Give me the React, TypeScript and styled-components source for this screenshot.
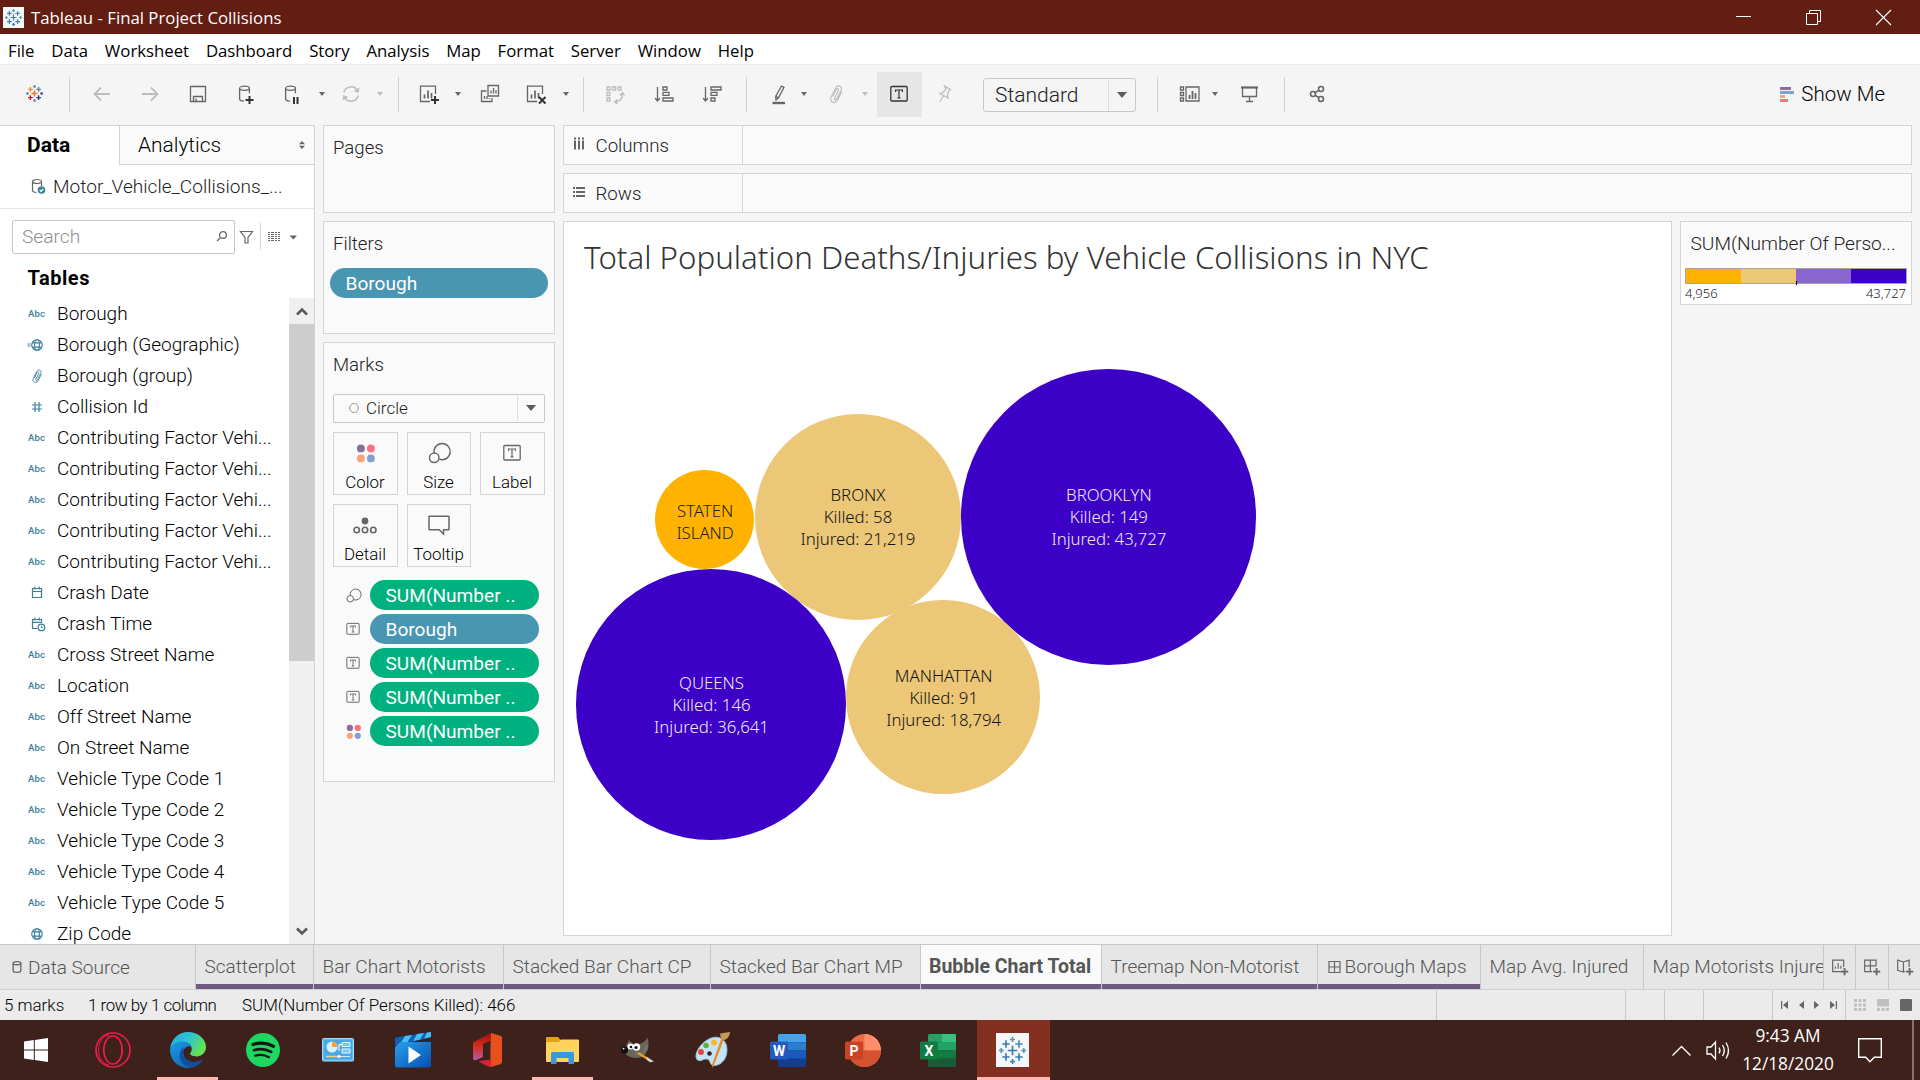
import React from "react";
import styled, { createGlobalStyle, css } from "styled-components";

const UI = `Roboto, "Liberation Sans", sans-serif`;
const SYS = `"Open Sans", "Liberation Sans", sans-serif`;
const VIZ = `"Noto Sans", "Liberation Sans", sans-serif`;
const LINE = "#d4d4d4";
const GREY = "#666666";
const LIGHT = "#bdbdbd";
const TEAL = "#3d7f9b";

const Global = createGlobalStyle`
  * { box-sizing: border-box; }
  body { margin: 0; background: #f5f5f5; overflow: hidden; }
  svg { display: block; flex: none; overflow: visible; }
`;

const Screen = styled.div`
  width: 1920px;
  height: 1080px;
  display: flex;
  flex-direction: column;
  background: #f5f5f5;
  font-family: ${UI};
  font-weight: 300;
  color: #000;
  white-space: nowrap;
  overflow: hidden;
`;

/* ---------- window chrome ---------- */

const TitleBar = styled.header`
  height: 34px;
  flex: none;
  display: flex;
  align-items: center;
  padding: 0 29px 0 3px;
  background: #621e12;
  color: #fff;
  font: 400 16.8px ${SYS};
`;
const TitleText = styled.span`
  flex: 1;
  padding-left: 7px;
`;
const WindowButtons = styled.div`
  display: flex;
  gap: 55px;
`;

const MenuBar = styled.nav`
  height: 31px;
  flex: none;
  display: flex;
  gap: 16.8px;
  padding-left: 8px;
  background: #fff;
  border-bottom: 1px solid #ececec;
  font: 400 16.75px/34px ${SYS};
`;

/* ---------- toolbar ---------- */

const ToolBarRow = styled.div`
  height: 59px;
  flex: none;
  display: flex;
  align-items: center;
  padding: 0 35px 1px 0;
`;
const Tool = styled.span<{ $gap: number }>`
  width: 24px;
  height: 24px;
  flex: none;
  margin-left: ${(p) => p.$gap}px;
`;
const Caret = styled.span<{ $gap: number; $dim?: boolean }>`
  width: 8px;
  flex: none;
  margin-left: ${(p) => p.$gap}px;
  display: flex;
  justify-content: center;
  &::after {
    content: "";
    border: 3px solid transparent;
    border-top: 4px solid ${(p) => (p.$dim ? LIGHT : GREY)};
    border-bottom: 0;
  }
`;
const Separator = styled.span<{ $gap: number }>`
  width: 1px;
  height: 35px;
  flex: none;
  margin-left: ${(p) => p.$gap}px;
  background: #d0d0d0;
`;
const ActiveTool = styled.span`
  width: 45px;
  height: 45px;
  flex: none;
  margin-left: 8px;
  padding-right: 2px;
  display: flex;
  align-items: center;
  justify-content: center;
  background: #e6e6e6;
`;
const FitSelect = styled.div`
  width: 153px;
  height: 34px;
  flex: none;
  margin: 1px 0 0 27px;
  display: flex;
  align-items: center;
  border: 1px solid #c8c8c8;
  border-radius: 3px;
  font-size: 21px;
  color: #222;
`;
const SelectValue = styled.span`
  flex: 1;
  padding-left: 11px;
`;
const SelectArrow = styled.span<{ $w: number }>`
  width: ${(p) => p.$w}px;
  align-self: stretch;
  display: flex;
  align-items: center;
  justify-content: center;
  border-left: 1px solid #dedede;
  &::after {
    content: "";
    border: 5px solid transparent;
    border-top: 6px solid #5c5c5c;
    border-bottom: 0;
  }
`;
const ShowMe = styled.div`
  margin-left: auto;
  display: flex;
  align-items: center;
  gap: 7.5px;
  font-size: 20.5px;
`;

/* ---------- workspace ---------- */

const Body = styled.main`
  height: 820px;
  flex: none;
  display: flex;
  padding-top: 1px;
`;

const DataPane = styled.aside`
  width: 315px;
  flex: none;
  display: flex;
  flex-direction: column;
  background: #fff;
  border-top: 1px solid ${LINE};
  border-right: 1px solid ${LINE};
`;
const PaneTabs = styled.div`
  height: 39px;
  flex: none;
  display: flex;
  line-height: 38px;
`;
const DataTab = styled.div`
  width: 119px;
  padding-left: 27px;
  font-size: 21px;
  font-weight: 700;
`;
const AnalyticsTab = styled.div`
  flex: 1;
  display: flex;
  align-items: center;
  justify-content: space-between;
  padding: 0 9px 0 18px;
  background: #fafafa;
  border-left: 1px solid ${LINE};
  border-bottom: 1px solid ${LINE};
  font-size: 20.9px;
`;
const SourceRow = styled.div`
  height: 44px;
  flex: none;
  display: flex;
  align-items: center;
  gap: 7px;
  padding-left: 31px;
  border-bottom: 1px solid #e4e4e4;
  font-size: 19.1px;
  color: #222;
`;
const SearchRow = styled.div`
  flex: none;
  display: flex;
  align-items: center;
  padding: 11px 0 0 12px;
`;
const SearchBox = styled.div`
  width: 223px;
  height: 34px;
  display: flex;
  align-items: center;
  justify-content: space-between;
  padding: 0 7px 2px 9px;
  border: 1px solid #c8c8c8;
  border-radius: 2px;
  color: #8e8e8e;
  font-size: 19.2px;
`;
const SearchTools = styled.div`
  display: flex;
  align-items: center;
  padding-left: 5px;
  padding-bottom: 1px;
`;
const ThinRule = styled.span`
  width: 1px;
  height: 27px;
  margin: 0 7px 0 6px;
  background: ${LINE};
`;
const TablesHeading = styled.h2`
  margin: 0;
  height: 43px;
  flex: none;
  padding-left: 27.5px;
  font: 700 20px/48px ${UI};
  letter-spacing: 0.55px;
`;
const FieldArea = styled.div`
  flex: 1;
  min-height: 0;
  display: flex;
  overflow: hidden;
`;
const FieldList = styled.ul`
  flex: 1;
  margin: 0;
  padding: 1px 0 0;
  list-style: none;
`;
const Field = styled.li`
  height: 31px;
  display: flex;
  align-items: center;
  padding-left: 24.5px;
  gap: 8.5px;
  font-size: 19px;
`;
const FieldIcon = styled.span`
  width: 24px;
  height: 24px;
  flex: none;
  display: flex;
  align-items: center;
  justify-content: center;
  font: 500 9.6px ${UI};
  letter-spacing: 0.1px;
  color: ${TEAL};
`;
const ScrollBar = styled.div`
  width: 25px;
  margin-top: 1px;
  display: flex;
  flex-direction: column;
  background: #f0f0f0;
`;
const ScrollButton = styled.span`
  height: 26px;
  flex: none;
  display: flex;
  align-items: center;
  justify-content: center;
`;
const ScrollThumb = styled.span`
  height: 337px;
  background: #cdcdcd;
`;
const ScrollTrack = styled.span`
  flex: 1;
`;

const Shelves = styled.section`
  width: 232px;
  flex: none;
  margin-left: 8px;
  display: flex;
  flex-direction: column;
  gap: 8px;
`;
const Card = styled.div<{ $h: number }>`
  height: ${(p) => p.$h}px;
  flex: none;
  background: #fafafa;
  border: 1px solid ${LINE};
`;
const CardTitle = styled.div`
  height: 46px;
  padding-left: 9px;
  font-size: 18.6px;
  line-height: 44.5px;
  color: #222;
`;
const pillTone = { blue: "#4996b2", green: "#00b180" };
const Pill = styled.div<{ $tone: keyof typeof pillTone; $w: number }>`
  width: ${(p) => p.$w}px;
  height: 30px;
  flex: none;
  padding-left: 15.5px;
  border-radius: 15px;
  background: ${(p) => pillTone[p.$tone]};
  color: #fff;
  font-size: 19.1px;
  font-weight: 400;
  line-height: 31px;
`;
const FilterPills = styled.div`
  padding-left: 6px;
`;
const MarkSelect = styled.div`
  width: 212px;
  height: 29px;
  margin: 5px 0 0 9px;
  display: flex;
  align-items: center;
  border: 1px solid #c8c8c8;
  border-radius: 2px;
  font-size: 17px;
  line-height: 25px;
  padding-bottom: 1px;
  color: #222;
`;
const MarkShape = styled.span`
  width: 10px;
  height: 10px;
  margin-left: 15px;
  border: 1.5px solid #999;
  border-radius: 50%;
`;
const MarkName = styled.span`
  flex: 1;
  padding-left: 7px;
`;
const MarkGrid = styled.div`
  display: grid;
  grid-template-columns: 65px 64px 65px;
  grid-auto-rows: 63px;
  gap: 9px;
  padding: 9px 0 0 9px;
`;
const MarkButton = styled.div`
  display: flex;
  flex-direction: column;
  align-items: center;
  border: 1px solid ${LINE};
  padding: 8px 1px 0 0;
  font-size: 16.9px;
  line-height: 34px;
  svg { height: 24px; }
`;
const Encodings = styled.div`
  display: flex;
  flex-direction: column;
  gap: 4px;
  padding: 13px 0 0 17px;
`;
const Encoding = styled.div`
  display: flex;
  align-items: center;
  gap: 5px;
`;

const Canvas = styled.section`
  width: 1349px;
  flex: none;
  margin-left: 8px;
  display: flex;
  flex-direction: column;
  gap: 8px;
`;
const Shelf = styled.div`
  height: 40px;
  flex: none;
  display: flex;
  background: #fafafa;
  border: 1px solid ${LINE};
`;
const ShelfLabel = styled.div`
  width: 179px;
  display: flex;
  align-items: center;
  gap: 4.5px;
  padding-left: 3px;
  border-right: 1px solid ${LINE};
  font-size: 18.7px;
  line-height: 38px;
  color: #222;
  span { padding-top: 1px; }
`;
const ViewRow = styled.div`
  display: flex;
  gap: 8px;
  align-items: flex-start;
`;
const View = styled.div`
  width: 1109px;
  height: 715px;
  position: relative;
  background: #fff;
  border: 1px solid ${LINE};
`;
const ViewTitle = styled.h1`
  margin: 0;
  padding-left: 20px;
  font: 300 31.26px/70px ${VIZ};
  color: #333;
`;
const Bubble = styled.div<{ $cx: number; $cy: number; $r: number; $fill: string; $ink: string; $drop?: number }>`
  position: absolute;
  left: ${(p) => p.$cx - p.$r}px;
  top: ${(p) => p.$cy - p.$r}px;
  width: ${(p) => p.$r * 2}px;
  height: ${(p) => p.$r * 2}px;
  padding: ${(p) => p.$drop ?? 1}px 0 0 1px;
  display: flex;
  flex-direction: column;
  align-items: center;
  justify-content: center;
  border-radius: 50%;
  background: ${(p) => p.$fill};
  color: ${(p) => p.$ink};
  font: 300 16.8px/22px ${VIZ};
`;

const Legend = styled.div`
  width: 232px;
  height: 84px;
  display: flex;
  flex-direction: column;
  background: #fff;
  border: 1px solid ${LINE};
`;
const LegendTitle = styled.div`
  height: 42px;
  padding-left: 9.5px;
  background: #fafafa;
  font-size: 19.1px;
  line-height: 44px;
  color: #222;
`;
const Ramp = styled.div`
  height: 16px;
  margin: 4px 4px 0;
  display: grid;
  grid-template-columns: repeat(4, 1fr);
  border: 1px solid #a9a59a;
  position: relative;
  &::after {
    content: "";
    position: absolute;
    left: 110px;
    top: 12px;
    width: 1px;
    height: 4px;
    background: #000;
  }
`;
const Swatch = styled.span<{ $c: string }>`
  background: ${(p) => p.$c};
`;
const LegendRange = styled.div`
  display: flex;
  justify-content: space-between;
  padding: 0 5px 0 4px;
  font: 300 13px/19px ${VIZ};
  color: #222;
`;

/* ---------- sheet tabs and status ---------- */

const SheetTabs = styled.div`
  height: 46px;
  flex: none;
  display: flex;
  background: #e6e6e6;
  border-top: 1px solid #c8c8c8;
  border-bottom: 1px solid #d0d0d0;
`;
const Sheet = styled.div<{ $w: number; $story?: boolean; $active?: boolean }>`
  width: ${(p) => p.$w}px;
  flex: none;
  padding-left: 8.5px;
  border-left: 1px solid #c8c8c8;
  overflow: hidden;
  font-size: 19px;
  line-height: 44px;
  color: #555;
  display: flex;
  align-items: center;
  ${(p) => p.$story && css`box-shadow: inset 0 -5px 0 #6f5b82;`}
  ${(p) => p.$active && css`
    background: #fafafa;
    font-weight: 700;
    font-size: 19.5px;
    line-height: 42px;
    padding-bottom: 1px;
    padding-left: 8px;
  `}
`;
const SheetIcon = styled.span`
  margin: 0 3px 0 -1px;
`;
const SourceTab = styled.div`
  width: 195px;
  flex: none;
  display: flex;
  align-items: center;
  padding-left: 5px;
  font-size: 19px;
  line-height: 45px;
  color: #555;
`;
const NewSheet = styled.div<{ $w: number }>`
  width: ${(p) => p.$w}px;
  flex: none;
  display: flex;
  align-items: center;
  justify-content: center;
  border-left: 1px solid #c8c8c8;
`;

const StatusBar = styled.footer`
  height: 30px;
  flex: none;
  display: flex;
  background: #ebebeb;
  padding-left: 4px;
  font-size: 16.95px;
  line-height: 30px;
`;
const StatusText = styled.span<{ $w: number; $tight?: boolean }>`
  width: ${(p) => p.$w}px;
  letter-spacing: ${(p) => (p.$tight ? "-0.45px" : "0")};
`;
const StatusCell = styled.span<{ $w: number; $gap?: number }>`
  width: ${(p) => p.$w}px;
  display: flex;
  align-items: center;
  justify-content: center;
  gap: ${(p) => p.$gap ?? 0}px;
  border-left: 1px solid #c8c8c8;
`;

/* ---------- taskbar ---------- */

const TaskBar = styled.div`
  height: 60px;
  flex: none;
  display: flex;
  background: #3d211a;
  color: #fff;
`;
const Task = styled.div<{ $open?: boolean; $active?: boolean; $first?: boolean }>`
  width: 75px;
  flex: none;
  display: flex;
  align-items: center;
  justify-content: center;
  padding-right: ${(p) => (p.$first ? 3 : 0)}px;
  background: ${(p) =>
    p.$active
      ? "linear-gradient(#ffb9b0, #ffb9b0) right bottom / 73px 3px no-repeat, linear-gradient(#832f22, #832f22) right center / 73px 100% no-repeat"
      : p.$open
      ? "linear-gradient(#ffb9b0, #ffb9b0) center bottom / 61px 3px no-repeat"
      : "none"};
`;
const Tray = styled.div`
  flex: 1;
  display: flex;
  align-items: center;
  justify-content: flex-end;
`;
const Clock = styled.div`
  width: 112px;
  margin-right: 14px;
  text-align: center;
  font: 400 17.3px/28px ${SYS};
  padding-bottom: 1px;
`;
const TrayIcon = styled.span<{ $gap: number }>`
  margin-right: ${(p) => p.$gap}px;
`;
const DesktopPeek = styled.span`
  width: 8px;
  align-self: stretch;
  border-left: 2px solid #8b716b;
`;

/* ---------- drawings ---------- */

type IcoProps = { size?: number; box?: number; color?: string; width?: number; children: React.ReactNode };
const Ico = ({ size = 24, box = 24, color = GREY, width = 1.3, children }: IcoProps) => (
  <svg width={size} height={size} viewBox={`0 0 ${box} ${box}`} fill="none" stroke={color} strokeWidth={width}>
    {children}
  </svg>
);

const plus = (x: number, y: number, r: number) => `M${x - r} ${y}h${2 * r}M${x} ${y - r}v${2 * r}`;

const TableauMark = ({ size, colors, width = 1.4 }: { size: number; colors: string[]; width?: number }) => (
  <Ico size={size} width={width}>
    <path stroke={colors[0]} d={plus(12, 12, 4.2)} />
    <path stroke={colors[1]} d={plus(6.2, 6.2, 3.3)} />
    <path stroke={colors[2]} d={plus(17.8, 6.2, 3.3)} />
    <path stroke={colors[3]} d={plus(6.2, 17.8, 3.3)} />
    <path stroke={colors[4]} d={plus(17.8, 17.8, 3.3)} />
    <path stroke={colors[5]} d={plus(12, 2.2, 2.2)} />
    <path stroke={colors[6]} d={plus(12, 21.8, 2.2)} />
    <path stroke={colors[7]} d={plus(2, 12, 2.2)} />
    <path stroke={colors[8]} d={plus(22, 12, 2.2)} />
  </Ico>
);
const blues = ["#3b7fae", "#3b7fae", "#4b8db5", "#3b7fae", "#3b7fae", "#5a9ac0", "#3f85b2", "#5a9ac0", "#5a9ac0"];
const brand = ["#e8762d", "#eb912c", "#59879b", "#c72035", "#1f457e", "#7199a6", "#7199a6", "#7099a5", "#5c6692"];

const Cylinder = () => (
  <>
    <ellipse cx="10.5" cy="6.3" rx="4.9" ry="2.1" />
    <path d="M5.6 6.3V17c0 1.1 1.8 2 4.4 2.1M15.4 6.3v5" />
  </>
);
const ChartBox = () => (
  <>
    <path d="M18.5 12V4.2h-15v15.3H13" />
    <path d="M7.5 16.5v-4M11 16.5v-8M14.5 16.5v-5.5" strokeWidth="1.7" />
  </>
);
const TBox = ({ size = 24, color = GREY }: { size?: number; color?: string }) => (
  <Ico size={size} color={color}>
    <rect x="3.8" y="4.5" width="16.4" height="14.5" rx="1" />
    <path d="M8.6 10V8h6.8v2M12 8v8M10.3 16h3.4" strokeWidth="1.2" />
  </Ico>
);
const Dots = ({ size = 24 }: { size?: number }) => (
  <svg width={size} height={size} viewBox="0 0 24 24">
    <circle cx="6.2" cy="6.2" r="5" fill="#8a6f98" />
    <circle cx="18.8" cy="6.2" r="5" fill="#fb7180" />
    <circle cx="6.2" cy="18.8" r="5" fill="#f4a57d" />
    <circle cx="18.8" cy="18.8" r="5" fill="#7fa3cc" />
  </svg>
);
const SizeIcon = ({ size = 24 }: { size?: number }) => (
  <Ico size={size} width={1.6}>
    <path d="M6.700 11.800a8.800 8.800 0 1 1 5.900 7" />
    <circle cx="6.800" cy="17.200" r="5.200" />
  </Ico>
);
const Clip = ({ size = 24, color = LIGHT }: { size?: number; color?: string }) => (
  <Ico size={size} color={color} width={1.2}>
    <path d="M14.300 8.600l-3.700 7.600c-.9 2 1.200 2.800 2.100.9l4.500-8.900c1.700-3.700-3.600-6-5.500-2.300L7 15.300c-2.200 4.600 4.200 7.300 6.400 3.200l4.400-8.900" />
    <path d="M14.300 8.600c.9-1.900-1.300-2.700-2.200-.9L8.600 14.500" />
  </Ico>
);
const Globe = ({ eq }: { eq?: boolean }) => (
  <Ico size={24} color={TEAL} width={1.1}>
    <circle cx="12" cy="12" r="5.300" />
    <ellipse cx="12" cy="12" rx="2.400" ry="5.300" />
    <path d="M7.300 9.900h9.400M7.300 14.100h9.400" />
    {eq && <path d="M2.500 11h3M2.500 13h3" />}
  </Ico>
);
const Calendar = ({ clock }: { clock?: boolean }) => (
  <Ico size={24} color={TEAL} width={1.2}>
    {clock ? <path d="M12.500 16.500H7.500v-9h9v3M7.500 10.300h9M9.800 5.500v3M14.200 5.500v3" /> : <path d="M7.500 7.500h9v9h-9zM7.500 10.500h9M9.800 5.500v3M14.200 5.500v3" />}
    {clock && (
      <>
        <circle cx="16.400" cy="15.400" r="3.300" />
        <path d="M16.400 13.700v2h1.500" strokeWidth="1" />
      </>
    )}
  </Ico>
);
const Hash = () => (
  <Ico size={24} color={TEAL} width={1.2}>
    <path d="M10 7v10M14 7v10M7 10h10M7 14h10" />
  </Ico>
);
const ColumnsIcon = () => (
  <svg width="24" height="24" viewBox="0 0 24 24" fill={GREY}>
    {[7, 11, 15].map((x) => (
      <path key={x} d={`M${x} 4.500h2v2h-2zM${x} 7.500h2v9h-2z`} />
    ))}
  </svg>
);
const RowsIcon = () => (
  <svg width="24" height="24" viewBox="0 0 24 24" fill={GREY}>
    {[6, 10, 14].map((y) => (
      <path key={y} d={`M6 ${y}h2v2h-2zM9 ${y}h9v2h-9z`} />
    ))}
  </svg>
);
const MiniGrid = ({ hero }: { hero?: boolean }) => (
  <svg width="12" height="12" viewBox="0 0 12 12" fill="#c0c0c0">
    {hero ? <path d="M0 0h12v7.500H0z" /> : <path d="M0 0h3v3H0zM4.500 0h3v3h-3zM9 0h3v3H9zM0 4.500h3v3H0zM4.500 4.500h3v3h-3zM9 4.500h3v3H9z" />}
    <path d="M0 9h3v3H0zM4.500 9h3v3h-3zM9 9h3v3H9z" />
  </svg>
);

/* ---------- taskbar logos ---------- */

const WindowsLogo = () => (
  <svg width="24" height="24" viewBox="0 0 24 24" fill="#fff">
    <path d="M0 3.400l9.800-1.400v9.400H0zM10.800 1.900L24 0v11.400H10.800zM0 12.500h9.800v9.400L0 20.600zM10.800 12.500H24V24l-13.200-1.900z" />
  </svg>
);
const OperaLogo = () => (
  <Ico size={36} box={36} color="#ee1c4b" width={1.700}>
    <circle cx="18" cy="18" r="17" />
    <ellipse cx="18" cy="18" rx="9.300" ry="14" />
    <path d="M21 5.500c8 2.500 8 22.500 0 25" strokeWidth="1.300" />
    <path d="M14 3c-14 3-14 27 0 30" strokeWidth="1" />
  </Ico>
);
const EdgeLogo = () => (
  <svg width="36" height="36" viewBox="0 0 36 36">
    <defs>
      <linearGradient id="edgeTop" x1="0" x2="1" y1="0" y2=".5">
        <stop offset="0" stopColor="#2aa7e6" />
        <stop offset=".5" stopColor="#2bc3d2" />
        <stop offset="1" stopColor="#62e34f" />
      </linearGradient>
      <linearGradient id="edgeLow" x1="0" x2="1" y1="0" y2="1">
        <stop offset="0" stopColor="#1a9be6" />
        <stop offset="1" stopColor="#0c59a4" />
      </linearGradient>
    </defs>
    <path fill="url(#edgeTop)" d="M0 17C1 7 8.500 0 18 0c10 0 18 6.800 18 15 0 5.500-4.500 9.500-9.500 9.500-4 0-6.500-1.600-6.500-2.900 0-1 1.800-1.600 1.800-4.600 0-3.500-3.600-6.500-9-6.500C6.500 10.500 1.500 13.500 0 17z" />
    <path fill="url(#edgeLow)" d="M0 18C.5 13.500 5.500 9.500 12.500 9.500c4.500 0 8 1.800 9 5-6-1.500-10 3.500-7.500 9.500 2.800 6.500 12 8 19 3.600C30 32.600 24.500 36 18 36 8 36 0 28 0 18z" />
    <path fill="#0f4fa0" d="M14.500 14.800c-7.500 4.500-6.500 18.200 6.500 20.900 5-.9 9.300-4 12-8.100-8 4.400-15.500 2.400-18.600-2.600-2-3.600-1.800-7.600.1-10.200z" />
  </svg>
);
const SpotifyLogo = () => (
  <Ico size={34} box={34} color="#191414" width={3}>
    <circle cx="17" cy="17" r="17" fill="#1ed760" stroke="none" />
    <path strokeLinecap="round" d="M7 11.500c7-2.200 14.500-1.500 20.500 1.800" strokeWidth="3.200" />
    <path strokeLinecap="round" d="M8 17.200c6-1.800 12-1.200 17.200 1.700" strokeWidth="2.700" />
    <path strokeLinecap="round" d="M9 22.700c5-1.500 9.800-1 14 1.500" strokeWidth="2.200" />
  </Ico>
);
const PanelLogo = () => (
  <svg width="32" height="24" viewBox="0 0 32 24">
    <rect x=".5" y=".5" width="31" height="22.500" rx="1" fill="#5cbcf0" stroke="#9fdcf8" />
    <rect x="2" y="2" width="28" height="19.500" fill="#4aa9e4" />
    <circle cx="10" cy="9" r="5.500" fill="#d8f1fd" />
    <path d="M10 9V3.500A5.500 5.500 0 0 1 15.500 9z" fill="#f9a03f" />
    <path d="M20 4.500h8v4h-8zM20 11h8v4h-8z" fill="#7cc7ee" stroke="#dff4fd" />
    <path d="M17 13V6.500h3" stroke="#fff" fill="none" />
    <path d="M4 18.500h14" stroke="#f8cf72" strokeWidth="1.500" />
    <path d="M18 18.500h10" stroke="#cfeefc" />
    <circle cx="17" cy="18.500" r="1.500" fill="#fff" />
  </svg>
);
const MoviesLogo = () => (
  <svg width="36" height="36" viewBox="0 0 36 36">
    <defs>
      <linearGradient id="mv" x1="0" x2="1" y1="0" y2="1">
        <stop offset="0" stopColor="#2aa0e8" />
        <stop offset=".5" stopColor="#1477d2" />
        <stop offset="1" stopColor="#0b4fae" />
      </linearGradient>
    </defs>
    <path d="M0 5.500L35.500 0v5.500L0 14z" fill="#0f5db5" />
    <path d="M10 4l7-1-4.500 7-7 1.500zM22 2l7-1-4 6.500-7 1.500zM32 .6l4-.6v5l-7 1.500z" fill="#46c0f2" />
    <path d="M0 15.500L5 10h31v23.500a2 2 0 0 1-2 2H2a2 2 0 0 1-2-2z" fill="url(#mv)" />
    <path d="M13.500 14.500L26 23l-12.500 8.500z" fill="#fff" />
  </svg>
);
const OfficeLogo = () => (
  <svg width="29" height="34" viewBox="0 0 29 34">
    <defs>
      <linearGradient id="of" x1="0" x2="0" y1="0" y2="1">
        <stop offset="0" stopColor="#a80f0c" />
        <stop offset=".5" stopColor="#d3301f" />
        <stop offset="1" stopColor="#b35ab5" />
      </linearGradient>
    </defs>
    <path d="M0 9.500L18 0l-.5 7.500-7.500 3.500V24L2 27.500 0 26z" fill="url(#of)" />
    <path d="M18 0l9 2.800c1.200.4 2 1 2 2.500v23.500c0 1.200-.8 2-2 2.400L18 34c-1 0-.5-27 0-34z" fill="#e8501c" />
    <path d="M6 28l12-1.500V34c-1.500 0-3-.4-4.500-1.300L6.500 29z" fill="#d61f3a" />
  </svg>
);
const FolderLogo = () => (
  <svg width="33" height="27" viewBox="0 0 33 27">
    <path d="M0 1a1 1 0 0 1 1-1h11l3 3.500L12 6H0z" fill="#e5a117" />
    <path d="M0 5h12.500L15 2.500h17a1 1 0 0 1 1 1V24a1 1 0 0 1-1 1H1a1 1 0 0 1-1-1z" fill="#ffd45e" />
    <path d="M5 27V16.500A1.500 1.500 0 0 1 6.500 15h20a1.500 1.500 0 0 1 1.500 1.500V27h-5.500v-6h-12v6z" fill="#3a96dd" />
  </svg>
);
const GimpLogo = () => (
  <svg width="34" height="26" viewBox="0 0 34 26">
    <path d="M5 9l3-6 4 4c5 1.500 11-1 15-6.500 1.500 9 0 16-5.500 19-6 3-14 1.500-17-3C2 15 2 11 5 9z" fill="#6b665b" />
    <path d="M14 16c5 2 10 0 12-8" stroke="#8a8577" fill="none" />
    <ellipse cx="3.500" cy="13" rx="3.500" ry="3.800" fill="#111" />
    <circle cx="2.600" cy="11.600" r=".9" fill="#fff" />
    <circle cx="9.500" cy="9.500" r="3" fill="#fff" />
    <circle cx="15.500" cy="10" r="3.700" fill="#fff" />
    <circle cx="10" cy="10" r="1.300" fill="#111" />
    <circle cx="15" cy="10.500" r="1.600" fill="#111" />
    <path d="M17 16l10 6" stroke="#e89a2e" strokeWidth="2.500" />
    <path d="M26 20l7 4.500-4 .8-3.500-2.500z" fill="#cfd6dd" />
  </svg>
);
const PaintLogo = () => (
  <svg width="36" height="36" viewBox="0 0 36 36">
    <path d="M14 7c10-5 18 1 18 11 0 9-6 15.500-13 15.500-5 0-3-6-7-6.500-4-.4-6 3-9.500 1C-2 24 4 12 14 7z" fill="#c5e3f4" stroke="#8fc0dd" />
    <circle cx="6" cy="20" r="2.900" fill="#e0443a" />
    <circle cx="11" cy="13.500" r="2.800" fill="#5cb531" />
    <circle cx="19" cy="10.500" r="2.900" fill="#f8b62b" />
    <circle cx="14.500" cy="21.500" r="2.300" fill="#3d211a" />
    <path d="M29 7L19 33l-1.500 3-.5-3.500L26.500 6z" fill="#e58a2c" />
    <path d="M25 1.500L35 0c0 3.500-2.500 7-5.500 8L26 6.500z" fill="#c9975a" />
  </svg>
);
const OfficeLetter = styled.text`
  font: 700 14px ${UI};
  fill: #fff;
`;
const OfficeApp = ({ letter, bands, tile, round }: { letter: string; bands: string[]; tile: string; round?: boolean }) => (
  <svg width="36" height="33" viewBox="0 0 36 33">
    {round ? (
      <>
        <circle cx="19.500" cy="16.500" r="16.500" fill={bands[0]} />
        <path d="M19.500 0A16.500 16.500 0 0 1 36 16.500H19.500z" fill={bands[1]} />
        <path d="M3 16.500h33a16.500 16.500 0 0 1-33 0z" fill={bands[2]} />
      </>
    ) : (
      <>
        <path d="M8 8.200V1.500A1.500 1.500 0 0 1 9.500 0h25A1.500 1.500 0 0 1 36 1.500v6.700z" fill={bands[0]} />
        <path d="M8 8.200h28v8.300H8z" fill={bands[1]} />
        <path d="M8 16.500h28v8.300H8z" fill={bands[2]} />
        <path d="M8 24.800h28v6.700a1.500 1.500 0 0 1-1.500 1.500h-25A1.500 1.500 0 0 1 8 31.500z" fill={bands[3]} />
        {bands[4] && <path d="M22 0h12.500A1.500 1.500 0 0 1 36 1.500v6.700H22z" fill={bands[4]} />}
      </>
    )}
    <rect x="0" y="7.500" width="18" height="18" rx="1.500" fill={tile} />
    <OfficeLetter x="9" y="21.500" textAnchor="middle">{letter}</OfficeLetter>
  </svg>
);
const TableauTile = styled.span<{ $w: number; $h: number }>`
  width: ${(p) => p.$w}px;
  height: ${(p) => p.$h}px;
  flex: none;
  display: flex;
  align-items: center;
  justify-content: center;
  background: #f4f6f8;
`;

/* ---------- data ---------- */

type FieldKind = "abc" | "geo" | "globe" | "clip" | "hash" | "date" | "time";
const fields: [FieldKind, string][] = [
  ["abc", "Borough"],
  ["geo", "Borough (Geographic)"],
  ["clip", "Borough (group)"],
  ["hash", "Collision Id"],
  ["abc", "Contributing Factor Vehi..."],
  ["abc", "Contributing Factor Vehi..."],
  ["abc", "Contributing Factor Vehi..."],
  ["abc", "Contributing Factor Vehi..."],
  ["abc", "Contributing Factor Vehi..."],
  ["date", "Crash Date"],
  ["time", "Crash Time"],
  ["abc", "Cross Street Name"],
  ["abc", "Location"],
  ["abc", "Off Street Name"],
  ["abc", "On Street Name"],
  ["abc", "Vehicle Type Code 1"],
  ["abc", "Vehicle Type Code 2"],
  ["abc", "Vehicle Type Code 3"],
  ["abc", "Vehicle Type Code 4"],
  ["abc", "Vehicle Type Code 5"],
  ["globe", "Zip Code"],
];
const fieldIcon: Record<FieldKind, React.ReactNode> = {
  abc: "Abc",
  geo: <Globe eq />,
  globe: <Globe />,
  clip: <Clip size={18} color={TEAL} />,
  hash: <Hash />,
  date: <Calendar />,
  time: <Calendar clock />,
};

const bubbles = [
  { cx: 140.6, cy: 297.7, r: 49.7, fill: "#ffb300", ink: "#222", drop: 4, lines: ["STATEN", "ISLAND"] },
  { cx: 293.5, cy: 294.8, r: 103, fill: "#ebc777", ink: "#111", lines: ["BRONX", "Killed: 58", "Injured: 21,219"] },
  { cx: 544.4, cy: 294.8, r: 147.8, fill: "#3d00c6", ink: "#efeaff", lines: ["BROOKLYN", "Killed: 149", "Injured: 43,727"] },
  { cx: 147, cy: 482.7, r: 135.3, fill: "#3d00c6", ink: "#efeaff", lines: ["QUEENS", "Killed: 146", "Injured: 36,641"] },
  { cx: 379.2, cy: 475, r: 97, fill: "#ebc777", ink: "#111", lines: ["MANHATTAN", "Killed: 91", "Injured: 18,794"] },
];

const encodings: [React.ReactNode, keyof typeof pillTone, string][] = [
  [<SizeIcon size={15} />, "green", "SUM(Number .."],
  [<TBox size={18} />, "blue", "Borough"],
  [<TBox size={18} />, "green", "SUM(Number .."],
  [<TBox size={18} />, "green", "SUM(Number .."],
  [<Dots size={15} />, "green", "SUM(Number .."],
];
const EncodingIcon = styled.span`
  width: 24px;
  display: flex;
  justify-content: center;
`;

/* ---------- page ---------- */

const Toolbar = () => (
  <ToolBarRow>
    <Tool $gap={22.5}><Ico><g transform="translate(3 3)"><TableauMark size={17} colors={brand} width={2} /></g></Ico></Tool>
    <Separator $gap={22.5} />
    <Tool $gap={20}><Ico color={LIGHT} width={1.8}><path d="M20 12H4.500M11 5.500L4.500 12l6.500 6.500" /></Ico></Tool>
    <Tool $gap={24}><Ico color={LIGHT} width={1.8}><path d="M4 12h15.500M13 5.500l6.500 6.500-6.500 6.500" /></Ico></Tool>
    <Tool $gap={24}><Ico><path d="M4.500 4.500h15v15h-15zM7.500 19v-4.500h9V19M10 19v-2.500" /></Ico></Tool>
    <Tool $gap={24}><Ico><Cylinder /><path d={plus(15.5, 18, 4)} stroke="#333" strokeWidth="2" /></Ico></Tool>
    <Tool $gap={22}><Ico><Cylinder /><path d="M14 15v7M17.500 15v7" stroke="#333" strokeWidth="2" /></Ico></Tool>
    <Caret $gap={14} />
    <Tool $gap={13}>
      <Ico color={LIGHT} width={1.5}>
        <path d="M4.800 10.500a7.400 7.400 0 0 1 13.700-1.800M19.200 13.500a7.400 7.400 0 0 1-13.700 1.800" />
        <path d="M20.500 5.500l-.8 5.500-5-2zM3.500 18.500l.8-5.500 5 2z" fill={LIGHT} stroke="none" />
      </Ico>
    </Tool>
    <Caret $gap={13} $dim />
    <Separator $gap={14} />
    <Tool $gap={18}><Ico><ChartBox /><path d={plus(18, 18, 4)} stroke="#333" strokeWidth="2" /></Ico></Tool>
    <Caret $gap={13} />
    <Tool $gap={16}>
      <Ico>
        <path d="M10 3.500h10.500v10.500H10zM8.500 9H3.500v10.500H14V16" />
        <path d="M13 11.500v-3M15.500 11.500v-5.500M18 11.500V8M6.500 17v-3M9 17v-3M11.500 17v-1" />
      </Ico>
    </Tool>
    <Tool $gap={22}><Ico><ChartBox /><path d="M15 15l6.500 6.500M21.500 15L15 21.500" stroke="#333" strokeWidth="2" /></Ico></Tool>
    <Caret $gap={14} />
    <Separator $gap={13} />
    <Tool $gap={19}>
      <Ico color={LIGHT}>
        <path d="M4 5h3v3H4zM9.500 5h3v3h-3zM15 5h3v3h-3zM4 10.500h3v3H4zM4 16h3v3H4zM12 20c5 0 7.500-3 7.500-8.500M17 13.500l2.500-3 2 3M14.500 17.500l-3 2.500 3 2" />
      </Ico>
    </Tool>
    <Tool $gap={25}>
      <Ico><path d="M5.500 5v14M3 16l2.500 3L8 16M11 5h4v3h-4zM11 10.300h6v3h-6zM11 16h10v3H11z" /></Ico>
    </Tool>
    <Tool $gap={24}>
      <Ico><path d="M5.500 5v14M3 16l2.500 3L8 16M11 5h10v3H11zM11 10.300h6v3h-6zM11 16h4v3h-4z" /></Ico>
    </Tool>
    <Separator $gap={22} />
    <Tool $gap={20}>
      <Ico><path d="M14.500 4l2.500 1.300-5.500 10.500-2.500 2.200-.3-3.500zM9.200 14.500l2.500 1.300" /><path d="M5.500 21h12.500" strokeWidth="2.400" /></Ico>
    </Tool>
    <Caret $gap={9} />
    <Tool $gap={16}><Clip /></Tool>
    <Caret $gap={13} $dim />
    <ActiveTool><TBox color="#333" /></ActiveTool>
    <Tool $gap={10}>
      <Ico color={LIGHT}><path d="M12.500 4l6 3.500-1.500 1-1.500 4 .5 3.500L8 11.500l3-1 3-3.500zM11.500 14l-4 6" /></Ico>
    </Tool>
    <FitSelect><SelectValue>Standard</SelectValue><SelectArrow $w={27} /></FitSelect>
    <Separator $gap={21} />
    <Tool $gap={20}>
      <Ico><path d="M2.500 5h3v3h-3zM2.500 10.500h3v3h-3zM2.500 16h3v3h-3zM8 5h13v14H8z" /><path d="M11.500 17v-4M14.500 17V9M17.500 17v-6" strokeWidth="1.800" /></Ico>
    </Tool>
    <Caret $gap={9} />
    <Tool $gap={18}>
      <Ico><path d="M5.500 6v8.500h14V6M12.500 14.500v5M9 19.500h7" /><path d="M4 5.500h17" strokeWidth="2.200" /></Ico>
    </Tool>
    <Separator $gap={23} />
    <Tool $gap={20}>
      <Ico width={1.6}><circle cx="8" cy="12" r="2.500" /><circle cx="16" cy="7" r="2.500" /><circle cx="16" cy="17" r="2.500" /><path d="M10.200 10.700l3.700-2.400M10.200 13.300l3.700 2.400" /></Ico>
    </Tool>
    <ShowMe>
      <svg width="14" height="15" viewBox="0 0 14 15">
        <path d="M0 0h11v3H0z" fill="#8a6f98" />
        <path d="M0 4h14v3H0z" fill="#7fa3cc" />
        <path d="M0 8h5v3H0z" fill="#f4a57d" />
        <path d="M0 12h8v3H0z" fill="#fb7180" />
      </svg>
      Show Me
    </ShowMe>
  </ToolBarRow>
);

export default function App() {
  return (
    <Screen>
      <Global />
      <TitleBar>
        <TableauTile $w={21} $h={21}><TableauMark size={17} colors={blues} width={1.7} /></TableauTile>
        <TitleText>Tableau - Final Project Collisions</TitleText>
        <WindowButtons>
          <Ico size={15} box={15} color="#fff" width={1}><path d="M0 6.500h15" /></Ico>
          <Ico size={15} box={15} color="#fff" width={1}><path d="M.5 3.500h11v11H.500zM3.500 3.500V.500h11v11h-3" /></Ico>
          <Ico size={15} box={15} color="#fff" width={1.1}><path d="M0 0l15 15M15 0L0 15" /></Ico>
        </WindowButtons>
      </TitleBar>
      <MenuBar>
        {["File", "Data", "Worksheet", "Dashboard", "Story", "Analysis", "Map", "Format", "Server", "Window", "Help"].map((m) => (
          <span key={m}>{m}</span>
        ))}
      </MenuBar>
      <Toolbar />

      <Body>
        <DataPane>
          <PaneTabs>
            <DataTab>Data</DataTab>
            <AnalyticsTab>
              Analytics
              <svg width="6" height="8" viewBox="0 0 6 8" fill={GREY}><path d="M3 0l3 3.300H0zM0 4.700h6L3 8z" /></svg>
            </AnalyticsTab>
          </PaneTabs>
          <SourceRow>
            <Ico size={15} box={15} width={1.2}>
              <ellipse cx="6" cy="2.500" rx="4.500" ry="2" />
              <path d="M1.500 2.500v9c0 1 1.500 1.800 4 2M10.500 2.500V7" />
              <circle cx="10.500" cy="11" r="3.800" fill={TEAL} stroke="none" />
              <path d="M8.800 11l1.300 1.300L12.300 10" stroke="#fff" />
            </Ico>
            Motor_Vehicle_Collisions_...
          </SourceRow>
          <SearchRow>
            <SearchBox>
              Search
              <Ico size={10} box={10} width={1.3}><circle cx="6" cy="4" r="3.400" /><path d="M3.600 6.400L0 10" /></Ico>
            </SearchBox>
            <SearchTools>
              <Ico size={14} box={14} width={1.2}><path d="M.5 1.500h12L8 7.500v5.500h-3V7.500z" /></Ico>
              <ThinRule />
              <svg width="12" height="10" viewBox="0 0 12 10" fill={GREY}>
                {[0, 2, 4, 6, 8].map((y) => <path key={y} d={`M0 ${y}h2v1H0zM3 ${y}h3v1H3zM7 ${y}h2v1H7zM10 ${y}h2v1h-2z`} />)}
              </svg>
              <Ico size={28} box={28} width={0}><path d="M9.500 12.500h7.500l-3.750 4z" fill={GREY} /></Ico>
            </SearchTools>
          </SearchRow>
          <TablesHeading>Tables</TablesHeading>
          <FieldArea>
            <FieldList>
              {fields.map(([kind, name], i) => (
                <Field key={i}><FieldIcon>{fieldIcon[kind]}</FieldIcon>{name}</Field>
              ))}
            </FieldList>
            <ScrollBar>
              <ScrollButton><Ico size={12} box={12} color="#5a5a5a" width={2.600}><path d="M1 9.500l5-5 5 5" /></Ico></ScrollButton>
              <ScrollThumb />
              <ScrollTrack />
              <ScrollButton><Ico size={12} box={12} color="#5a5a5a" width={2.600}><path d="M1 3.500l5 5 5-5" /></Ico></ScrollButton>
            </ScrollBar>
          </FieldArea>
        </DataPane>

        <Shelves>
          <Card $h={88}><CardTitle>Pages</CardTitle></Card>
          <Card $h={113}>
            <CardTitle>Filters</CardTitle>
            <FilterPills><Pill $tone="blue" $w={218}>Borough</Pill></FilterPills>
          </Card>
          <Card $h={440}>
            <CardTitle>Marks</CardTitle>
            <MarkSelect><MarkShape /><MarkName>Circle</MarkName><SelectArrow $w={27} /></MarkSelect>
            <MarkGrid>
              <MarkButton><Dots size={19} />Color</MarkButton>
              <MarkButton><SizeIcon size={22} />Size</MarkButton>
              <MarkButton><TBox size={28} />Label</MarkButton>
              <MarkButton>
                <Ico width={1.600}>
                  <circle cx="12" cy="8" r="3.400" fill={GREY} stroke="none" />
                  <circle cx="3.700" cy="17" r="2.700" /><circle cx="12" cy="17" r="2.700" /><circle cx="20.300" cy="17" r="2.700" />
                </Ico>
                Detail
              </MarkButton>
              <MarkButton>
                <Ico width={1.500}><path d="M2.500 3.300h19a.5.5 0 0 1 .5.5v12.400a.5.5 0 0 1-.5.500h-5V21l-4.300-4.300H2.500a.5.5 0 0 1-.5-.5V3.800a.5.5 0 0 1 .5-.5z" /></Ico>
                Tooltip
              </MarkButton>
            </MarkGrid>
            <Encodings>
              {encodings.map(([icon, tone, label], i) => (
                <Encoding key={i}><EncodingIcon>{icon}</EncodingIcon><Pill $tone={tone} $w={169}>{label}</Pill></Encoding>
              ))}
            </Encodings>
          </Card>
        </Shelves>

        <Canvas>
          <Shelf><ShelfLabel><ColumnsIcon /><span>Columns</span></ShelfLabel></Shelf>
          <Shelf><ShelfLabel><RowsIcon /><span>Rows</span></ShelfLabel></Shelf>
          <ViewRow>
            <View>
              <ViewTitle>Total Population Deaths/Injuries by Vehicle Collisions in NYC</ViewTitle>
              {bubbles.map((b) => (
                <Bubble key={b.lines[0]} $cx={b.cx} $cy={b.cy} $r={b.r} $fill={b.fill} $ink={b.ink} $drop={b.drop}>
                  {b.lines.map((l) => <span key={l}>{l}</span>)}
                </Bubble>
              ))}
            </View>
            <Legend>
              <LegendTitle>SUM(Number Of Perso...</LegendTitle>
              <Ramp>
                <Swatch $c="#ffb300" /><Swatch $c="#ebc777" /><Swatch $c="#8966cd" /><Swatch $c="#3d00c6" />
              </Ramp>
              <LegendRange><span>4,956</span><span>43,727</span></LegendRange>
            </Legend>
          </ViewRow>
        </Canvas>
      </Body>

      <SheetTabs>
        <SourceTab>
          <Ico size={23} width={1.400}><ellipse cx="12.500" cy="7.500" rx="4" ry="1.600" /><path d="M8.500 7.500v8c0 2.200 8 2.200 8 0v-8" /></Ico>
          Data Source
        </SourceTab>
        <Sheet $w={118} $story>Scatterplot</Sheet>
        <Sheet $w={190} $story>Bar Chart Motorists</Sheet>
        <Sheet $w={207} $story>Stacked Bar Chart CP</Sheet>
        <Sheet $w={210} $story>Stacked Bar Chart MP</Sheet>
        <Sheet $w={181} $story $active>Bubble Chart Total</Sheet>
        <Sheet $w={216} $story>Treemap Non-Motorist</Sheet>
        <Sheet $w={163} $story>
          <SheetIcon><Ico size={16} box={16} width={1.200}><path d="M3 2.500h11v11H3zM8.500 2.500v11M3 8h11" /></Ico></SheetIcon>
          Borough Maps
        </Sheet>
        <Sheet $w={163}>Map Avg. Injured</Sheet>
        <Sheet $w={180}>Map Motorists Injure</Sheet>
        <NewSheet $w={32}>
          <Ico size={22}><path d="M16 12V4.500H4v12.500h9M7 14v-2.500M10 14V8M13 14v-3.500" /><path d={plus(17, 17, 4)} strokeWidth="2" /></Ico>
        </NewSheet>
        <NewSheet $w={33}>
          <Ico size={22}><path d="M16.500 11V4.500H4v12.500h8M10.200 4.500V17M4 10.700h12.500" /><path d={plus(17, 17, 4)} strokeWidth="2" /></Ico>
        </NewSheet>
        <NewSheet $w={32}>
          <Ico size={22}><path d="M16.500 12V4.500l-6.200 2-6.300-2v11l6.300 2V6.500M10.300 17.500l2-.6" /><path d={plus(17, 17, 4)} strokeWidth="2" /></Ico>
        </NewSheet>
      </SheetTabs>

      <StatusBar>
        <StatusText $w={84}>5 marks</StatusText>
        <StatusText $w={154} $tight>1 row by 1 column</StatusText>
        <StatusText $w={1194}>SUM(Number Of Persons Killed): 466</StatusText>
        <StatusCell $w={189} />
        <StatusCell $w={39} />
        <StatusCell $w={39} />
        <StatusCell $w={69} />
        <StatusCell $w={73} $gap={10.5}>
          <svg width="7" height="8" viewBox="0 0 7 8" fill={GREY}><path d="M0 0h1.200v8H0zM7 0v8L2 4z" /></svg>
          <svg width="5" height="8" viewBox="0 0 5 8" fill={GREY}><path d="M5 0v8L0 4z" /></svg>
          <svg width="5" height="8" viewBox="0 0 5 8" fill={GREY}><path d="M0 0v8l5-4z" /></svg>
          <svg width="7" height="8" viewBox="0 0 7 8" fill={GREY}><path d="M5.800 0H7v8H5.800zM0 0v8l5-4z" /></svg>
        </StatusCell>
        <StatusCell $w={75} $gap={11}>
          <MiniGrid />
          <MiniGrid hero />
          <svg width="12" height="12" viewBox="0 0 12 12" fill={GREY}><rect width="12" height="12" rx="1" /></svg>
        </StatusCell>
      </StatusBar>

      <TaskBar>
        <Task $first><WindowsLogo /></Task>
        <Task><OperaLogo /></Task>
        <Task $open><EdgeLogo /></Task>
        <Task><SpotifyLogo /></Task>
        <Task><PanelLogo /></Task>
        <Task><MoviesLogo /></Task>
        <Task><OfficeLogo /></Task>
        <Task $open><FolderLogo /></Task>
        <Task><GimpLogo /></Task>
        <Task><PaintLogo /></Task>
        <Task><OfficeApp letter="W" bands={["#41a5ee", "#2b7cd3", "#185abd", "#103f91"]} tile="#2459bd" /></Task>
        <Task><OfficeApp letter="P" bands={["#ed6c47", "#ff8f6b", "#d35230"]} tile="#c94423" round /></Task>
        <Task><OfficeApp letter="X" bands={["#21a366", "#21a366", "#107c41", "#185c37", "#33c481"]} tile="#107c41" /></Task>
        <Task $active><TableauTile $w={33} $h={34}><TableauMark size={27} colors={blues} width={1.500} /></TableauTile></Task>
        <Tray>
          <TrayIcon $gap={15}><Ico size={19} box={19} color="#fff" width={1.400}><path d="M.5 14.500l9-9 9 9" /></Ico></TrayIcon>
          <TrayIcon $gap={2}>
            <Ico size={24} color="#fff" width={1.300}>
              <path d="M1 9h4l4.500-5v17L5 16H1z" />
              <path d="M13 9.500q2 3 0 6M16.500 7q3.500 5.500 0 11M20 4.500q5 8 0 16" />
            </Ico>
          </TrayIcon>
          <Clock>9:43 AM<br />12/18/2020</Clock>
          <TrayIcon $gap={30}>
            <Ico size={24} color="#fff" width={1.400}><path d="M.7.700h22.600v18.600h-7l-4.300 4.500-4.300-4.500h-7z" /></Ico>
          </TrayIcon>
          <DesktopPeek />
        </Tray>
      </TaskBar>
    </Screen>
  );
}
